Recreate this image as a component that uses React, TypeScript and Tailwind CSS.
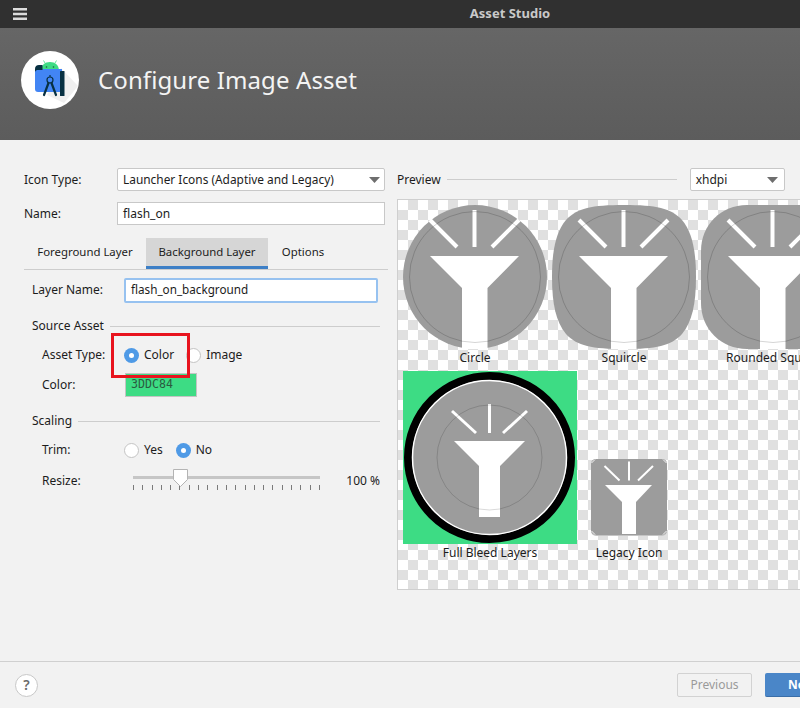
const FONT = 'font-["Noto_Sans",sans-serif]';

function Flash({ funnel, rays, width }: { funnel: string; rays: number[][]; width: number }) {
  return (
    <>
      <polygon points={funnel} fill="#ffffff" />
      {rays.map((r) => (
        <line key={r.join()} x1={r[0]} y1={r[1]} x2={r[2]} y2={r[3]} stroke="#ffffff" strokeWidth={width} />
      ))}
    </>
  );
}

const bigFunnel = '27,51 116,51 84.5,83 84.5,144 59,144 59,83';
const bigRays = [
  [71.5, 5, 71.5, 42],
  [27, 15, 54, 42],
  [116, 15, 89, 42],
];

function BigIcon({ shape, label }: { shape: 'circle' | 'squircle' | 'rounded'; label: string }) {
  return (
    <div className="flex w-[144px] shrink-0 flex-col items-center">
      <svg width="144" height="144" viewBox="0 0 144 144" className="overflow-visible">
        {shape === 'circle' && <circle cx="72" cy="72" r="72" fill="#9c9c9c" />}
        {shape === 'squircle' && (
          <path d="M72 0C40 0 25 3 14 15C4 27 0 45 0 72C0 99 4 117 14 129C25 141 40 144 72 144C104 144 119 141 130 129C140 117 144 99 144 72C144 45 140 27 130 15C119 3 104 0 72 0Z" fill="#9c9c9c" />
        )}
        {shape === 'rounded' && (
          <path d="M46 0H98C124 0 144 20 144 46V98C144 124 124 144 98 144H46C20 144 0 124 0 98V46C0 20 20 0 46 0Z" fill="#9c9c9c" />
        )}
        <Flash funnel={bigFunnel} rays={bigRays} width={4} />
        <circle cx="72" cy="72" r="65.5" fill="none" stroke="#000000" strokeOpacity="0.17" strokeWidth="1" />
      </svg>
      <span className="mt-px whitespace-nowrap text-xs leading-[16px] text-[#1c1c1c]">{label}</span>
    </div>
  );
}

function Radio({ checked, label, className }: { checked?: boolean; label: string; className?: string }) {
  return (
    <div className={`flex items-center gap-[5px] ${className ?? ''}`}>
      {checked ? (
        <span className="flex size-[15px] items-center justify-center rounded-full bg-[#4f9ae6]">
          <span className="size-[5px] rounded-full bg-white" />
        </span>
      ) : (
        <span className="size-[15px] rounded-full border border-[#c4c4c4] bg-white" />
      )}
      <span className="text-xs text-[#1c1c1c]">{label}</span>
    </div>
  );
}

function Section({ title }: { title: string }) {
  return (
    <div className="flex items-center gap-[6px] pr-[17px] pl-[32px]">
      <span className="text-xs leading-[16px] text-[#1c1c1c]">{title}</span>
      <div className="h-px flex-1 bg-[#cdcdcd]" />
    </div>
  );
}

function Caret() {
  return (
    <svg width="11" height="6" viewBox="0 0 11 6">
      <polygon points="0,0 11,0 5.5,6" fill="#6e6e6e" />
    </svg>
  );
}

function Logo() {
  return (
    <svg width="58" height="58" viewBox="0 0 58 58">
      <circle cx="29" cy="29" r="29" fill="#ffffff" />
      <polygon points="40,17 57,35 43,52 26,44" fill="#f0f0f0" />
      <path d="M20 20C20 14 24 11 29 11C34 11 38 14 38 20Z" fill="#3ddc84" />
      <path d="M24 12L22.500 9.500M34 12L35.500 9.500" stroke="#3ddc84" strokeWidth="0.8" />
      <circle cx="25.500" cy="16" r="0.8" fill="#1b5e3a" />
      <circle cx="32.500" cy="16" r="0.8" fill="#1b5e3a" />
      <path d="M14 18H41V41H17C15 41 14 40 14 38Z" fill="#4285f4" />
      <path d="M14 18C14 15.500 15.500 14 18 14H21.500V19H17C15.500 19 14.500 19.500 14 21Z" fill="#073042" />
      <rect x="39" y="20" width="4.500" height="25" rx="0.5" fill="#073042" />
      <path d="M29 24V26M26 29A3 3 0 1 1 32 29A3 3 0 1 1 26 29" fill="none" stroke="#073042" strokeWidth="1.200" />
      <path d="M27.500 32L23 44M30.500 32L35 44" stroke="#073042" strokeWidth="2.200" strokeLinecap="round" />
    </svg>
  );
}

function Slider() {
  const ticks = Array.from({ length: 21 }, (_, i) => i);
  return (
    <div className="relative -mt-[3px] h-[26px] w-[190px]">
      <div className="mt-[8px] ml-[1px] h-[3px] w-[187px] bg-[#c6c6c6]" />
      <div className="mt-[6px] ml-[1px] flex w-[187px] justify-between">
        {ticks.map((t) => (
          <span key={t} className="h-[5px] w-px bg-[#7a7a7a]" />
        ))}
      </div>
      <svg width="17" height="20" viewBox="0 0 17 20" className="absolute top-0 left-[40px]">
        <path d="M1.500 1.500H15.500V11.500L8.500 18.500L1.500 11.500Z" fill="#ffffff" stroke="#b4b4b4" strokeWidth="1" />
      </svg>
    </div>
  );
}

export default function App() {
  return (
    <div className={`relative h-[708px] w-[800px] overflow-hidden bg-[#f2f2f2] ${FONT}`}>
      <div className="flex h-[28px] w-[1020px] items-center justify-center bg-[#303030]">
        <span className="text-[13px] font-bold text-[#c9c9c9]">Asset Studio</span>
      </div>
      <svg width="14" height="12" viewBox="0 0 14 12" className="absolute top-[8px] left-[13px]">
        <path d="M0 0H14V2.500H0ZM0 4.750H14V7.250H0ZM0 9.500H14V12H0Z" fill="#dcdcdc" />
      </svg>

      <div className="flex h-[112px] items-center gap-[19px] bg-gradient-to-b from-[#666666] to-[#5c5c5c] pb-[8px] pl-[21px]">
        <Logo />
        <h1 className="text-[24px] font-normal tracking-[0.1px] text-[#f4f4f4]">Configure Image Asset</h1>
      </div>

      <div className="flex h-[522px] border-b border-[#d0d0d0] pt-[28px]">
        <div className="w-[397px] shrink-0 text-xs text-[#1c1c1c]">
          <div className="flex h-[23px] items-center pl-[24px]">
            <span className="w-[93px]">Icon Type:</span>
            <div className="flex h-[23px] w-[268px] items-center justify-between rounded-[2px] border border-[#c8c8c8] bg-white pr-[4px] pl-[5px]">
              <span className="text-[11.9px]">Launcher Icons (Adaptive and Legacy)</span>
              <Caret />
            </div>
          </div>
          <div className="mt-[11px] flex h-[23px] items-center pl-[24px]">
            <span className="w-[93px]">Name:</span>
            <div className="flex h-[23px] w-[268px] items-center border border-[#c8c8c8] bg-white pl-[5px]">flash_on</div>
          </div>

          <div className="mt-[13px] ml-[24px] flex h-[32px] w-[364px] border-b border-[#cdcdcd] text-[11.4px]">
            <div className="flex w-[122px] items-center justify-center border-b-[3px] border-transparent">Foreground Layer</div>
            <div className="flex w-[122px] items-center justify-center border-b-[3px] border-[#3d7fc6] bg-[#d6d6d6]">Background Layer</div>
            <div className="flex w-[70px] items-center justify-center border-b-[3px] border-transparent">Options</div>
          </div>

          <div className="mt-[7px] flex h-[26px] items-center pl-[32px]">
            <span className="w-[92px]">Layer Name:</span>
            <div className="flex h-[25px] w-[254px] items-center rounded-[2px] border-2 border-[#97c2f0] bg-white pl-[5px] text-[11.7px]">flash_on_background</div>
          </div>

          <div className="mt-[15px]">
            <Section title="Source Asset" />
          </div>
          <div className="mt-[11px] flex h-[20px] items-center pl-[42px]">
            <span className="w-[82px]">Asset Type:</span>
            <Radio checked label="Color" />
            <Radio label="Image" className="ml-[12px]" />
          </div>
          <div className="mt-[8px] flex h-[24px] items-center pl-[42px]">
            <span className="w-[83px]">Color:</span>
            <div className="flex h-[24px] w-[72px] items-center border border-[#c4c4c4] bg-[#3ddc84] pl-[5px] font-['DejaVu_Sans_Mono',monospace] text-[11.6px] text-[#2b5a40]">3DDC84</div>
          </div>

          <div className="mt-[16px]">
            <Section title="Scaling" />
          </div>
          <div className="mt-[11px] flex h-[20px] items-center pl-[42px]">
            <span className="w-[82px]">Trim:</span>
            <Radio label="Yes" />
            <Radio checked label="No" className="ml-[13px]" />
          </div>
          <div className="mt-[11px] flex h-[26px] items-start pl-[42px]">
            <span className="w-[90px] pt-[2px]">Resize:</span>
            <Slider />
            <span className="w-[58px] pt-[2px] text-right">100 %</span>
          </div>
        </div>

        <div className="w-[623px] shrink-0 text-xs text-[#1c1c1c]">
          <div className="flex h-[23px] w-[388px] items-center">
            <span>Preview</span>
            <div className="mx-[6px] h-px w-[230px] bg-[#cdcdcd]" />
            <div className="ml-[7px] flex h-[23px] w-[95px] items-center justify-between rounded-[2px] border border-[#c8c8c8] bg-white pr-[6px] pl-[5px]">
              <span>xhdpi</span>
              <Caret />
            </div>
          </div>
          <div className="mt-[8px] h-[391px] w-[500px] border border-[#cfcfcf] bg-white bg-[conic-gradient(#e0e0e0_25%,#ffffff_0_50%,#e0e0e0_0_75%,#ffffff_0)] bg-[length:20px_20px] pt-[5px] pl-[5px]">
            <div className="flex gap-[5px]">
              <BigIcon shape="circle" label="Circle" />
              <BigIcon shape="squircle" label="Squircle" />
              <BigIcon shape="rounded" label="Rounded Square" />
            </div>
            <div className="mt-[5px] flex items-end">
              <div className="flex w-[174px] flex-col items-center">
                <svg width="174" height="173" viewBox="0 0 174 173">
                  <rect width="174" height="173" fill="#3ddc84" />
                  <circle cx="86.500" cy="86.500" r="81.500" fill="#9c9c9c" stroke="#000000" strokeWidth="8" />
                  <circle cx="86.500" cy="86.500" r="77" fill="none" stroke="#ffffff" strokeWidth="1.500" />
                  <Flash funnel="51,70 122,70 97,95 97,146 76,146 76,95" rays={[[86.500, 33, 86.500, 62], [49, 40, 73, 62], [124, 40, 100, 62]]} width={3} />
                  <circle cx="86.500" cy="86.500" r="52.500" fill="none" stroke="#000000" strokeOpacity="0.15" strokeWidth="1" />
                </svg>
                <span className="mt-[1px] whitespace-nowrap leading-[16px]">Full Bleed Layers</span>
              </div>
              <div className="ml-[13px] flex w-[78px] flex-col items-center">
                <svg width="78" height="78" viewBox="0 0 78 78">
                  <rect x="1" y="1" width="76" height="77" rx="5" fill="#c4c4c4" />
                  <rect x="1" y="1" width="76" height="76" rx="5" fill="#9c9c9c" />
                  <path d="M1.500 5L5 1.500M73 1.500L76.500 5M1.500 73L5 76.500M73 76.500L76.500 73" stroke="#f4f4f4" strokeWidth="1" />
                  <Flash funnel="15,27 62,27 46,44 46,76 32,76 32,44" rays={[[39, 3.500, 39, 22.500], [14.500, 8, 29.500, 22.500], [63, 8, 48, 22.500]]} width={2} />
                </svg>
                <span className="mt-[9px] whitespace-nowrap leading-[16px]">Legacy Icon</span>
              </div>
            </div>
          </div>
        </div>
      </div>

      <div className="flex h-[46px] w-[840px] items-center justify-between pl-[15px]">
        <div className="flex size-[23px] items-center justify-center rounded-full border border-[#c8c8c8] bg-white text-sm font-semibold text-[#6a6a6a]">?</div>
        <div className="flex gap-[13px] text-xs">
          <div className="flex h-[24px] w-[75px] items-center justify-center rounded-[2px] border border-[#d2d2d2] text-[#9a9a9a]">Previous</div>
          <div className="flex h-[24px] w-[75px] items-center justify-center rounded-[2px] border-b border-[#3a6ea8] bg-[#4a86c8] font-bold text-white">Next</div>
        </div>
      </div>

      <div className="absolute top-[333px] left-[111px] h-[45px] w-[79px] border-[3px] border-[#e8141e]" />
    </div>
  );
}
